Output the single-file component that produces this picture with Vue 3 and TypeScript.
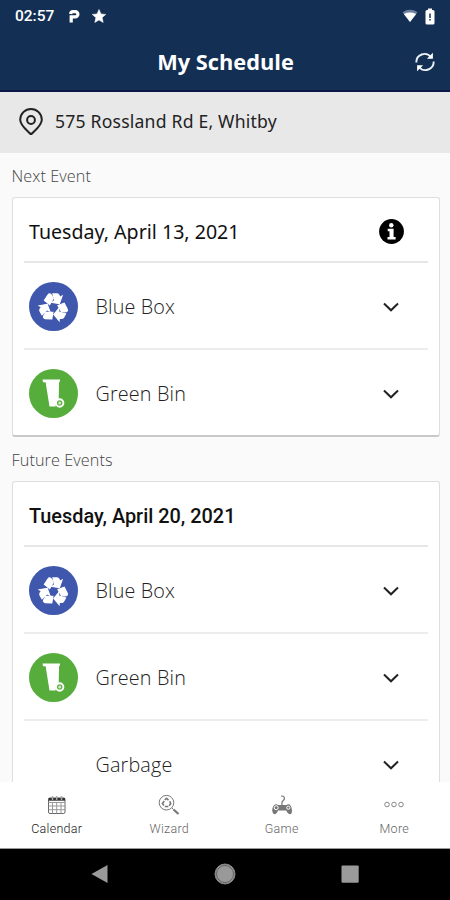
<script setup lang="ts">
interface EventItem {
  name: string
  kind: 'recycle' | 'bin' | 'none'
}
interface EventGroup {
  label: string
  date: string
  next: boolean
  items: EventItem[]
}

const groups: EventGroup[] = [
  {
    label: 'Next Event',
    date: 'Tuesday, April 13, 2021',
    next: true,
    items: [
      { name: 'Blue Box', kind: 'recycle' },
      { name: 'Green Bin', kind: 'bin' },
    ],
  },
  {
    label: 'Future Events',
    date: 'Tuesday, April 20, 2021',
    next: false,
    items: [
      { name: 'Blue Box', kind: 'recycle' },
      { name: 'Green Bin', kind: 'bin' },
      { name: 'Garbage', kind: 'none' },
    ],
  },
]
const tabs = ['Calendar', 'Wizard', 'Game', 'More']
</script>

<template>
  <div class="screen">
    <header class="top">
      <div class="status">
        <span class="clock">02:57</span>
        <svg class="parking" width="13" height="16" viewBox="0 0 13 16">
          <path d="M3.200 13.500V7.800H7.300a2.600 2.600 0 0 0 0-5.200H5Q2.800 2.600 2.600 5" fill="none" stroke="#fff" stroke-width="3.200" />
        </svg>
        <svg class="star" width="14" height="14" viewBox="0 0 14 14">
          <path d="M7 .4l2 4.500 4.800.5-3.600 3.200 1 4.900L7 11l-4.200 2.500 1-4.900L.2 5.400 5 4.900z" fill="#fff" stroke="#fff" stroke-width=".5" />
        </svg>
        <span class="grow"></span>
        <svg width="18" height="15" viewBox="0 0 18 15">
          <path d="M1.500 3.200Q9-1.500 16.500 3.200L9 13z" fill="#6d82a0" />
          <path d="M2.800 4.900Q9 2 15.200 4.900L9 13z" fill="#fff" />
        </svg>
        <svg class="battery" width="10" height="17" viewBox="0 0 10 17">
          <path d="M3 .5h4V2h1q1.500 0 1.500 1.500v11.500q0 1.500-1.500 1.500h-6Q.5 16.500.5 15V3.500Q.5 2 2 2H3z" fill="#fff" />
          <path d="M5 5.500v4.500M5 11v1.500" stroke="#132f54" stroke-width="1.500" />
        </svg>
      </div>
      <div class="titlebar">
        <h1>My Schedule</h1>
        <svg class="sync" width="20" height="20" viewBox="0 0 20 20" fill="none" stroke="#eef2f8" stroke-width="1.900">
          <path d="M1.300 10.500A8.300 8.300 0 0 1 16 5M18.700 9.500A8.300 8.300 0 0 1 4 15" />
          <path d="M17.900.8v6h-6zM2.100 19.200v-6h6z" fill="#fff" stroke="none" />
        </svg>
      </div>
    </header>

    <div class="address">
      <svg width="24" height="28" viewBox="0 0 24 28" fill="none" stroke="#222" stroke-width="2">
        <path d="M12 27.500C9 24 1.200 19 1.200 12.800a10.800 10.800 0 0 1 21.600 0C22.800 19 15 24 12 27.500z" />
        <circle cx="12" cy="13" r="3.900" />
      </svg>
      <span>575 Rossland Rd E, Whitby</span>
    </div>

    <main class="content">
      <section v-for="g in groups" :key="g.label">
        <h2>{{ g.label }}</h2>
        <div class="card">
          <div class="date" :class="{ bold: !g.next }">
            <span>{{ g.date }}</span>
            <svg v-if="g.next" width="25" height="25" viewBox="0 0 25 25">
              <circle cx="12.500" cy="12.500" r="12.400" fill="#000" />
              <circle cx="12.300" cy="6.200" r="2.200" fill="#fff" />
              <path d="M8.700 9.700h5.900v8.200h2v2.500H8.500v-2.500h2v-5.700H8.700z" fill="#fff" />
            </svg>
          </div>
          <div v-for="item in g.items" :key="item.name" class="row">
            <span class="disc" :class="item.kind">
              <svg v-if="item.kind === 'recycle'" width="49" height="49" viewBox="-24.500 -24.500 49 49">
                <g v-for="a in [0, 120, 240]" :key="a" :transform="`translate(0 1) scale(.92) rotate(${a})`" fill="#fff" stroke="#fff" stroke-width="1.300">
                  <path d="M-9.800-7.800l3.900-6.100Q-5.400-14.800-4-14.800Q-2.800-14.600-1.900-12.900L-.3-9.800L-4.200-3.200z" />
                  <path d="M-.6-14.800H3.500Q5-14.800 5.800-13.500L7.100-11.200 9.300-12.400 6.400-4.200-1.500-5.500 1.400-7.500z" />
                </g>
              </svg>
              <svg v-else-if="item.kind === 'bin'" width="49" height="49" viewBox="-24.500 -24.500 49 49">
                <path d="M-11-14H6.500v2.300H5.600L5.200 6H3.500L2 13H-4L-7.900-11.200H-10.500z" fill="#fff" />
                <circle cx="6.200" cy="9.500" r="3.700" fill="#62b146" stroke="#fff" stroke-width="1.900" />
                <circle cx="6.200" cy="9.500" r="1.500" fill="#cfe8c5" />
              </svg>
            </span>
            <span class="name">{{ item.name }}</span>
            <svg class="chevron" width="18" height="12" viewBox="0 0 18 12">
              <path d="M2 2.500L9 9.300 16 2.500" fill="none" stroke="#222" stroke-width="2" />
            </svg>
          </div>
        </div>
      </section>
    </main>

    <nav class="tabs">
      <div v-for="(t, i) in tabs" :key="t" class="tab" :class="{ active: i === 0 }">
        <svg width="22" height="22" viewBox="0 0 22 22" fill="none" stroke="#777" stroke-width="1">
          <template v-if="i === 0">
            <rect x="2.500" y="4" width="16.500" height="15.500" rx="1.500" stroke="#666" />
            <path d="M2.500 8.500H19M2.500 12H19M2.500 15.700H19M6.500 8v11.500M10.700 8v11.500M15 8v11.500" stroke="#999" />
            <path d="M2.500 5.300H19" stroke="#333" stroke-width="2.800" />
            <path d="M6.500 2v4M10.700 2v4M15.500 2v4" stroke="#aaa" stroke-width="1.500" />
          </template>
          <template v-else-if="i === 1">
            <circle cx="8.500" cy="8.700" r="7.300" />
            <path d="M5.800 11.500L4.500 9.300 6.300 7M6.800 5.800l1.700-1.500 2 1.800M11.800 7.300l.9 2.300-1.500 2.200M6.800 12.500h3.500" stroke-width="1.600" />
            <path d="M14 14l1.500 1.500" />
            <path d="M15.500 15.500l5 4.500" stroke-width="2.200" />
          </template>
          <template v-else-if="i === 2">
            <path d="M11 11V8l2.300-2.800V3.500L12.300 2.200 10 2" stroke-width="1.200" />
            <path d="M4 10.500Q5.500 9.800 7 11h8.500q1.500-1.200 3.500-.3Q20.500 12 21 16.500q0 3.500-2 3.800-2 0-3.800-3.800H7Q5.500 20.300 3.500 20.300 1.300 19.500 1.200 16q.5-4.500 2.800-5.500z" fill="#777" stroke="none" />
            <circle cx="5.200" cy="13.700" r="2" stroke="#fff" /><circle cx="17.300" cy="13.700" r="1.600" stroke="#fff" />
          </template>
          <template v-else>
            <g stroke="#888"><circle cx="4" cy="10.500" r="2.300" /><circle cx="11" cy="10.500" r="2.300" /><circle cx="18" cy="10.500" r="2.300" /></g>
          </template>
        </svg>
        <span>{{ t }}</span>
      </div>
    </nav>

    <footer class="system">
      <svg width="22" height="22" viewBox="0 0 22 22"><path d="M2.500 11L18.500 2v18z" fill="#9a9a9a" /></svg>
      <svg width="22" height="22" viewBox="0 0 22 22">
        <circle cx="11" cy="11" r="10" fill="#999" stroke="#888" />
        <circle cx="11" cy="11" r="8.500" fill="none" stroke="#555" stroke-width=".8" />
      </svg>
      <svg width="22" height="22" viewBox="0 0 22 22"><rect x="2.500" y="2.500" width="17.200" height="17.200" rx="1" fill="#9a9a9a" /></svg>
    </footer>
  </div>
</template>

<style>
body { margin: 0; overflow: hidden; }
</style>

<style scoped>
.screen {
  width: 450px;
  height: 900px;
  display: flex;
  flex-direction: column;
  overflow: hidden;
  background: #fafafa;
  font-family: "Noto Sans", "Open Sans", sans-serif;
  color: #222;
}
svg { display: block; flex: none; }
.top {
  height: 92px;
  box-sizing: border-box;
  flex: none;
  background: #132f54;
  border-bottom: 2px solid #0a1748;
  color: #fff;
}
.status { height: 32px; display: flex; align-items: center; padding: 0 15px 0 15px; }
.clock { font: 500 15.500px/34px Roboto, sans-serif; width: 53px; }
.parking { margin-top: 1px; }
.star { margin-left: 11px; }
.grow { flex: 1; }
.battery { margin-left: 6px; }
.titlebar {
  height: 60px;
  display: grid;
  grid-template-columns: 61px 1fr 60px;
  align-items: center;
}
h1 { grid-column: 2; margin: 0; text-align: center; font: 700 21.800px/58px "Open Sans", sans-serif; }
.sync { margin-left: 25px; }
.address {
  height: 61px;
  box-sizing: border-box;
  flex: none;
  background: #e8e8e8;
  display: flex;
  align-items: center;
  padding: 0 19px 3px;
  gap: 12px;
  font-size: 17.600px;
  letter-spacing: .2px;
}
.content { flex: 1; min-height: 0; overflow: hidden; padding: 0 11.500px; }
h2 {
  margin: 0;
  height: 44px;
  font: 350 16.200px/46px "Open Sans", sans-serif;
  letter-spacing: .1px;
  color: #444;
}
.card {
  box-sizing: border-box;
  border: 1px solid #dedede;
  border-bottom: 2px solid #c8c8c8;
  border-radius: 3px;
  background: #fff;
  padding: 0 11px;
  width: 428px;
  height: 240px;
}
section + section .card { height: 330px; }
.date {
  height: 64.500px;
  box-sizing: border-box;
  border-bottom: 2px solid #e6e6e6;
  display: flex;
  align-items: center;
  justify-content: space-between;
  padding: 5px 24px 0 5.500px;
  font-size: 19.600px;
  color: #111;
}
.date.bold { font: 500 19.900px Roboto, sans-serif; padding-top: 7px; }
.row {
  height: 87px;
  box-sizing: border-box;
  display: flex;
  align-items: center;
  padding: 3px 28px 0 5px;
  border-bottom: 2px solid #ededed;
}
.row:last-child { border-bottom: 0; padding-bottom: 2px; }
.disc { width: 49px; height: 49px; border-radius: 50%; display: flex; align-items: center; justify-content: center; }
.recycle { background: #3f57ad; }
.bin { background: #56ad3b; }
.name { flex: 1; margin-left: 18px; font: 350 19.800px "Open Sans", sans-serif; letter-spacing: .15px; color: #222; }
.tabs { height: 66px; flex: none; background: #fff; display: flex; border-bottom: 1px solid #999; }
.tab {
  flex: 1;
  display: flex;
  flex-direction: column;
  align-items: center;
  padding: 12px 0 0 1px;
  gap: 5px;
  font: 300 12.500px/16px Roboto, sans-serif;
  letter-spacing: .3px;
  color: #666;
}
.active { color: #222; }
.system {
  height: 51px;
  flex: none;
  background: #000;
  display: flex;
  justify-content: space-between;
  align-items: center;
  padding: 0 89px 2px;
  box-sizing: border-box;
}
</style>
